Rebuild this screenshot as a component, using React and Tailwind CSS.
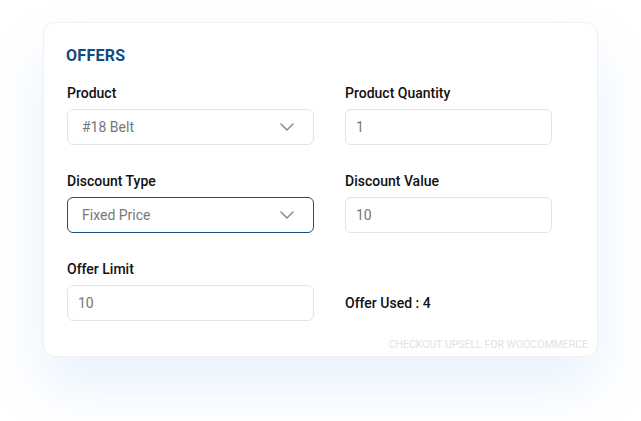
import React from 'react';

const Chevron = () => (
  <svg width="14" height="8" viewBox="0 0 14 8" fill="none" className="text-[#8a8a8a]">
    <path d="M1 1l6 6 6-6" stroke="currentColor" strokeWidth="1.5" strokeLinecap="round" strokeLinejoin="round" />
  </svg>
);

const Label = ({ children }) => (
  <div className="text-[14px] leading-[20px] font-medium text-[#111]">{children}</div>
);

const Select = ({ value, active }) => (
  <div
    className={
      active
        ? 'mt-[6px] h-[36px] rounded-[6px] border-[1.5px] border-[#1c4e7a] bg-white flex items-center justify-between pl-[14px] pr-[19px]'
        : 'mt-[6px] h-[36px] rounded-[6px] border border-[#e3e3e3] bg-white flex items-center justify-between pl-[14px] pr-[19px]'
    }
  >
    <span className="text-[14px] text-[#777]">{value}</span>
    <Chevron />
  </div>
);

const Input = ({ value }) => (
  <div className="mt-[6px] h-[36px] rounded-[6px] border border-[#e3e3e3] bg-white flex items-center px-[10px]">
    <span className="text-[14px] text-[#777]">{value}</span>
  </div>
);

export default function App() {
  return (
    <div className="w-[641px] h-[421px] bg-white pt-[22px] pl-[43px]" style={{ fontFamily: 'Roboto, "Noto Sans", sans-serif' }}>
      <div className="w-[555px] h-[335px] rounded-[12px] border border-[#eef0f3] bg-white shadow-[0_30px_55px_rgba(90,165,240,0.14)] pt-[21px] pl-[22px] pr-[9px] flex flex-col">
        <h2 className="text-[16px] leading-[24px] font-bold text-[#0f4c81] tracking-[0.3px]">OFFERS</h2>
        <div className="mt-[15px] pl-px grid grid-cols-[247px_207px] gap-x-[31px] gap-y-[26px]">
          <div>
            <Label>Product</Label>
            <Select value="#18 Belt" />
          </div>
          <div>
            <Label>Product Quantity</Label>
            <Input value="1" />
          </div>
          <div>
            <Label>Discount Type</Label>
            <Select value="Fixed Price" active />
          </div>
          <div>
            <Label>Discount Value</Label>
            <Input value="10" />
          </div>
          <div>
            <Label>Offer Limit</Label>
            <Input value="10" />
          </div>
          <div className="pt-[26px]">
            <div className="h-[36px] flex items-center text-[14px] font-medium text-[#111]">Offer Used : 4</div>
          </div>
        </div>
        <div className="mt-auto mb-[5px] text-right text-[10.5px] leading-[12px] text-[#e2e2e2] uppercase">
          Checkout Upsell for WooCommerce
        </div>
      </div>
    </div>
  );
}
